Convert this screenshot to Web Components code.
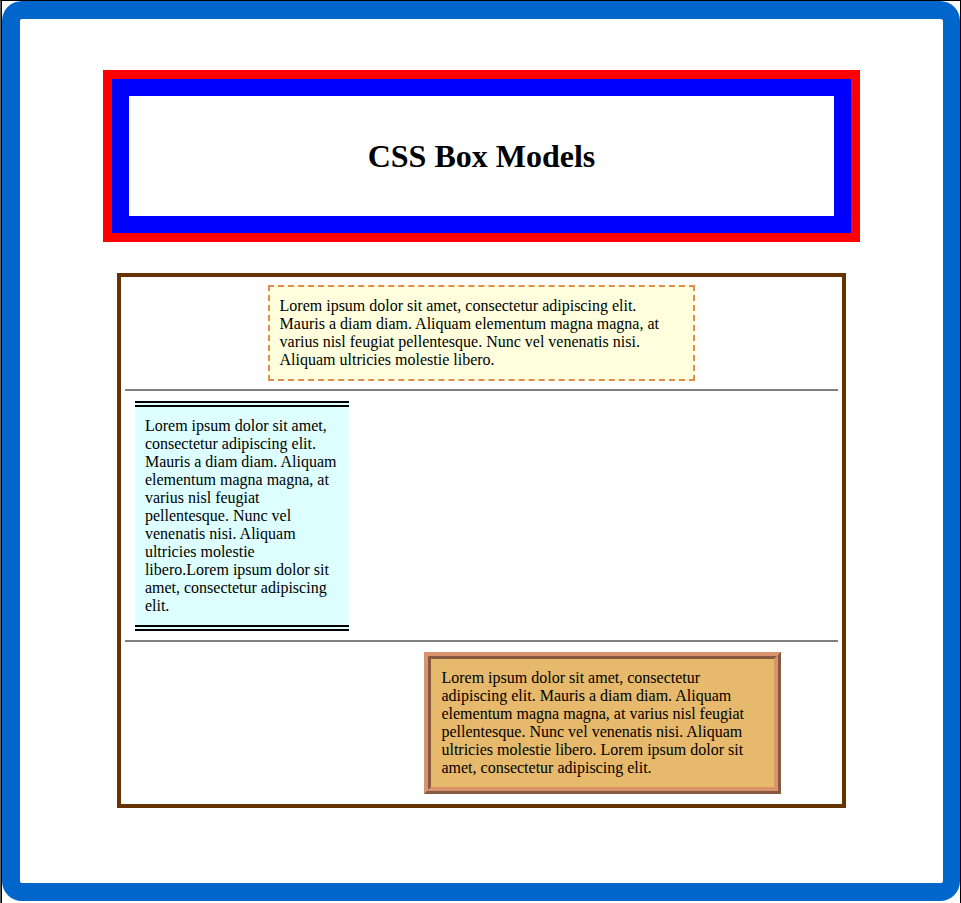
<!DOCTYPE html>
<html lang="en">
<head>
<meta charset="utf-8">
<meta name="viewport" content="width=device-width, initial-scale=1">
<title>CSS Box Models</title>
<style>
body { margin: 0; background: #fff; color: #000; font: 16px/18px "Liberation Serif", "Times New Roman", serif; }
</style>
</head>
<body>
<page-frame>
  <title-banner>CSS Box Models</title-banner>
  <box-panel>
    <text-box variant="dashed">Lorem ipsum dolor sit amet, consectetur adipiscing elit. Mauris a diam diam. Aliquam elementum magna magna, at varius nisl feugiat pellentesque. Nunc vel venenatis nisi. Aliquam ultricies molestie libero.</text-box>
    <rule-line></rule-line>
    <text-box variant="double">Lorem ipsum dolor sit amet, consectetur adipiscing elit. Mauris a diam diam. Aliquam elementum magna magna, at varius nisl feugiat pellentesque. Nunc vel venenatis nisi. Aliquam ultricies molestie libero.Lorem ipsum dolor sit amet, consectetur adipiscing elit.</text-box>
    <rule-line></rule-line>
    <text-box variant="ridge">Lorem ipsum dolor sit amet, consectetur adipiscing elit. Mauris a diam diam. Aliquam elementum magna magna, at varius nisl feugiat pellentesque. Nunc vel venenatis nisi. Aliquam ultricies molestie libero. Lorem ipsum dolor sit amet, consectetur adipiscing elit.</text-box>
  </box-panel>
</page-frame>
<script>
function define(name, html) {
  const template = document.createElement('template');
  template.innerHTML = html;
  customElements.define(name, class extends HTMLElement {
    constructor() {
      super();
      this.attachShadow({ mode: 'open' }).append(template.content.cloneNode(true));
    }
  });
}

define('page-frame', `
<style>
:host { display: block; box-sizing: border-box; min-height: 100vh; border: 1px solid #000; border-left: 1px solid #5c5f5a; border-bottom: 0; }
.edge { box-sizing: border-box; min-height: calc(100vh - 1px); border-left: 1px solid #000; padding-bottom: 2px; display: grid; }
main { display: flex; flex-direction: column; align-items: center; gap: 31px; box-sizing: border-box; border: 18px solid #0066cc; border-right-width: 17px; border-radius: 20px; padding: 51px 0; }
</style>
<div class="edge"><main><slot></slot></main></div>`);

define('title-banner', `
<style>
:host { display: block; box-sizing: border-box; width: 82%; border: 9px solid #f00; }
h1 { margin: 0; border: 17px solid #00f; padding: 42px 0; font-size: 32px; line-height: 36px; text-align: center; }
</style>
<h1><slot></slot></h1>`);

define('box-panel', `
<style>
:host { display: flex; flex-direction: column; box-sizing: border-box; width: 79%; border: 4px solid #663300; padding: 8px 4px 10px; }
</style>
<slot></slot>`);

define('rule-line', `
<style>
:host { display: block; margin: 8px 0 10px; }
hr { margin: 0; border: 0; height: 2px; background: #808080; }
</style>
<hr>`);

define('text-box', `
<style>
:host { display: block; box-sizing: border-box; padding: 10px; }
:host([variant="dashed"]) { align-self: center; width: 60%; border: 2px dashed #e08e4a; background: #ffffdd; }
:host([variant="double"]) { margin-left: 10px; width: 30%; border: 6px double #000; border-width: 6px 0; background: #ddffff; margin-bottom: 1px; }
:host([variant="ridge"]) { align-self: flex-end; width: 50%; margin-right: 8%; border: 7px ridge #d9946c; background: #e6b96c; }
p { margin: 0; }
</style>
<p><slot></slot></p>`);
</script>
</body>
</html>
